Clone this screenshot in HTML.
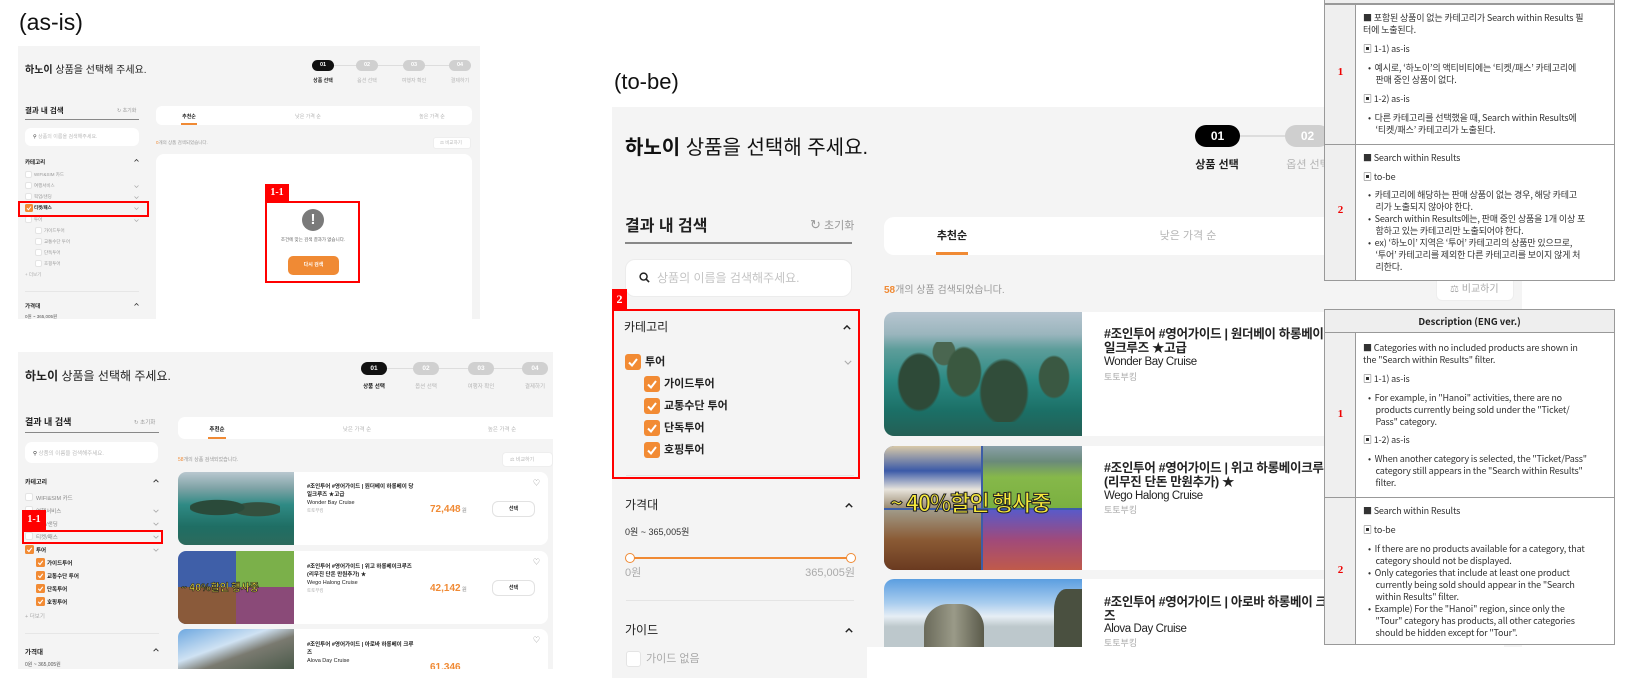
<!DOCTYPE html>
<html><head><meta charset="utf-8"><style>
*{margin:0;padding:0;box-sizing:border-box}
body{width:1631px;height:688px;position:relative;overflow:hidden;background:#fff;font-family:"Liberation Sans","Noto Sans CJK KR",sans-serif;color:#222}
.a{position:absolute;white-space:nowrap}
.p{position:absolute;background:#f4f4f4}
.w{position:absolute;background:#fff}
.cb{position:absolute;background:#fff;border:1px solid #e4e4e4;border-radius:2px}
.g{color:#b5b5b5}
.t{font-family:"Noto Sans CJK KR",sans-serif;font-size:9px;line-height:12px;color:#333;letter-spacing:-0.15px}
.red{position:absolute;border:2px solid #f00}
.lab{position:absolute;background:#f00;color:#fff;font-weight:bold;font-family:"Liberation Serif",serif;text-align:center}
</style></head><body>

<!-- ================= AS-IS 1 ================= -->
<div class="a" style="left:19px;top:8px;font-size:23px;line-height:28px;color:#111">(as-is)</div>
<div class="p" style="left:18px;top:46px;width:462px;height:273px"></div>
<div class="a" style="left:25px;top:65px;font-size:10px;line-height:12px"><b>하노이</b> 상품을 선택해 주세요.</div>
<div class="a" style="left:334px;top:65px;width:115px;height:1px;background:#ddd"></div>
<div class="a" style="left:312px;top:60px;width:22px;height:11px;border-radius:6px;background:#111;color:#fff;font-size:5.5px;line-height:11px;text-align:center;font-weight:bold">01</div>
<div class="a" style="left:356px;top:60px;width:22px;height:11px;border-radius:6px;background:#d0d0d0;color:#fff;font-size:5.5px;line-height:11px;text-align:center;font-weight:bold">02</div>
<div class="a" style="left:403px;top:60px;width:22px;height:11px;border-radius:6px;background:#d0d0d0;color:#fff;font-size:5.5px;line-height:11px;text-align:center;font-weight:bold">03</div>
<div class="a" style="left:449px;top:60px;width:22px;height:11px;border-radius:6px;background:#d0d0d0;color:#fff;font-size:5.5px;line-height:11px;text-align:center;font-weight:bold">04</div>
<div class="a" style="left:303px;top:77px;width:40px;text-align:center;font-size:5px;font-weight:bold">상품 선택</div>
<div class="a g" style="left:347px;top:77px;width:40px;text-align:center;font-size:5px">옵션 선택</div>
<div class="a g" style="left:394px;top:77px;width:40px;text-align:center;font-size:5px">여행자 확인</div>
<div class="a g" style="left:440px;top:77px;width:40px;text-align:center;font-size:5px">결제하기</div>

<div class="a" style="left:25px;top:106px;font-size:7.5px;font-weight:bold;line-height:10px">결과 내 검색</div>
<div class="a" style="left:117px;top:107px;font-size:5px;color:#999">↻ 초기화</div>
<div class="a" style="left:25px;top:119px;width:114px;height:1px;background:#888"></div>
<div class="w" style="left:25px;top:128px;width:114px;height:18px;border-radius:6px"></div>
<div class="a" style="left:33px;top:133px;font-size:5px;color:#bbb"><span style="color:#333">⚲</span> 상품의 이름을 검색해주세요.</div>
<div class="a" style="left:25px;top:158px;font-size:5.5px;font-weight:bold">카테고리</div>
<svg class="a" style="left:134px;top:159px" width="5" height="3" viewBox="0 0 10 6"><path d="M1 5l4-4 4 4" stroke="#333" stroke-width="1.6" fill="none"/></svg>

<div class="cb" style="left:25px;top:171px;width:7px;height:7px"></div><div class="a" style="left:34px;top:172px;font-size:4.5px;color:#999">WIFI&amp;SIM 카드</div>
<div class="cb" style="left:25px;top:182px;width:7px;height:7px"></div><div class="a" style="left:34px;top:183px;font-size:4.5px;color:#999">여행서비스</div>
<div class="cb" style="left:25px;top:193px;width:7px;height:7px"></div><div class="a" style="left:34px;top:194px;font-size:4.5px;color:#999">픽업/샌딩</div>
<svg class="a" style="left:25px;top:204px" width="8" height="8" viewBox="0 0 16 16"><rect width="16" height="16" rx="3" fill="#f28b34"/><path d="M4 8.5l3 3 5-6.5" stroke="#fff" stroke-width="2" fill="none"/></svg><div class="a" style="left:34px;top:205px;font-size:4.5px;font-weight:bold">티켓/패스</div>
<div class="cb" style="left:25px;top:216px;width:7px;height:7px"></div><div class="a" style="left:34px;top:217px;font-size:4.5px;color:#999">투어</div>
<div class="cb" style="left:35px;top:227px;width:7px;height:7px"></div><div class="a" style="left:44px;top:228px;font-size:4.5px;color:#999">가이드투어</div>
<div class="cb" style="left:35px;top:238px;width:7px;height:7px"></div><div class="a" style="left:44px;top:239px;font-size:4.5px;color:#999">교통수단 투어</div>
<div class="cb" style="left:35px;top:249px;width:7px;height:7px"></div><div class="a" style="left:44px;top:250px;font-size:4.5px;color:#999">단독투어</div>
<div class="cb" style="left:35px;top:260px;width:7px;height:7px"></div><div class="a" style="left:44px;top:261px;font-size:4.5px;color:#999">호핑투어</div>
<div class="a" style="left:25px;top:272px;font-size:4.5px;color:#aaa">+ 더보기</div>
<svg class="a" style="left:134px;top:185px" width="5" height="3" viewBox="0 0 10 6"><path d="M1 1l4 4 4-4" stroke="#aaa" stroke-width="1.4" fill="none"/></svg>
<svg class="a" style="left:134px;top:196px" width="5" height="3" viewBox="0 0 10 6"><path d="M1 1l4 4 4-4" stroke="#aaa" stroke-width="1.4" fill="none"/></svg>
<svg class="a" style="left:134px;top:207px" width="5" height="3" viewBox="0 0 10 6"><path d="M1 1l4 4 4-4" stroke="#aaa" stroke-width="1.4" fill="none"/></svg>
<svg class="a" style="left:134px;top:219px" width="5" height="3" viewBox="0 0 10 6"><path d="M1 1l4 4 4-4" stroke="#aaa" stroke-width="1.4" fill="none"/></svg>
<div class="a" style="left:25px;top:291px;width:114px;height:1px;background:#e6e6e6"></div>
<div class="a" style="left:25px;top:302px;font-size:5.5px;font-weight:bold">가격대</div>
<svg class="a" style="left:134px;top:303px" width="5" height="3" viewBox="0 0 10 6"><path d="M1 5l4-4 4 4" stroke="#333" stroke-width="1.6" fill="none"/></svg>
<div class="a" style="left:25px;top:314px;font-size:4.5px;color:#555">0원 ~ 365,005원</div>
<div class="red" style="left:18px;top:201px;width:131px;height:16px"></div>

<div class="w" style="left:156px;top:106px;width:316px;height:19px;border-radius:6px"></div>
<div class="a" style="left:174px;top:113px;width:30px;text-align:center;font-size:5px;font-weight:bold">추천순</div>
<div class="a" style="left:181px;top:123px;width:16px;height:2px;background:#f08a34"></div>
<div class="a g" style="left:288px;top:113px;width:40px;text-align:center;font-size:5px">낮은 가격 순</div>
<div class="a g" style="left:412px;top:113px;width:40px;text-align:center;font-size:5px">높은 가격 순</div>
<div class="a" style="left:156px;top:140px;font-size:4.5px;color:#999"><span style="color:#f08a34">0</span>개의 상품 검색되었습니다.</div>
<div class="w" style="left:433px;top:137px;width:38px;height:12px;border-radius:3px;border:1px solid #eee"></div>
<div class="a g" style="left:440px;top:140px;font-size:4.5px">⚖ 비교하기</div>
<div class="w" style="left:156px;top:154px;width:316px;height:165px;border-radius:8px 8px 0 0"></div>
<div class="a" style="left:302px;top:209px;width:22px;height:22px;border-radius:50%;background:#7a7a7a;color:#fff;font-size:15px;line-height:22px;text-align:center;font-weight:bold">!</div>
<div class="a" style="left:268px;top:237px;width:90px;text-align:center;font-size:4.5px;color:#666">조건에 맞는 검색 결과가 없습니다.</div>
<div class="a" style="left:288px;top:256px;width:51px;height:19px;border-radius:5px;background:#f08a34;color:#fff;font-size:5px;line-height:19px;text-align:center;font-weight:bold">다시 검색</div>
<div class="lab" style="left:265px;top:184px;width:24px;height:18px;font-size:10px;line-height:18px">1-1</div>
<div class="red" style="left:265px;top:201px;width:95px;height:82px"></div>

<!-- ================= AS-IS 2 ================= -->
<div class="p" style="left:18px;top:352px;width:535px;height:317px"></div>
<div class="a" style="left:25px;top:369px;font-size:12px;line-height:15px"><b>하노이</b> 상품을 선택해 주세요.</div>
<div class="a" style="left:387px;top:368px;width:150px;height:1px;background:#ddd"></div>
<div class="a" style="left:361px;top:362px;width:26px;height:13px;border-radius:7px;background:#111;color:#fff;font-size:6.5px;line-height:13px;text-align:center;font-weight:bold">01</div>
<div class="a" style="left:413px;top:362px;width:26px;height:13px;border-radius:7px;background:#d0d0d0;color:#fff;font-size:6.5px;line-height:13px;text-align:center;font-weight:bold">02</div>
<div class="a" style="left:468px;top:362px;width:26px;height:13px;border-radius:7px;background:#d0d0d0;color:#fff;font-size:6.5px;line-height:13px;text-align:center;font-weight:bold">03</div>
<div class="a" style="left:522px;top:362px;width:26px;height:13px;border-radius:7px;background:#d0d0d0;color:#fff;font-size:6.5px;line-height:13px;text-align:center;font-weight:bold">04</div>
<div class="a" style="left:354px;top:382px;width:40px;text-align:center;font-size:5.5px;font-weight:bold">상품 선택</div>
<div class="a g" style="left:406px;top:382px;width:40px;text-align:center;font-size:5.5px">옵션 선택</div>
<div class="a g" style="left:461px;top:382px;width:40px;text-align:center;font-size:5.5px">여행자 확인</div>
<div class="a g" style="left:515px;top:382px;width:40px;text-align:center;font-size:5.5px">결제하기</div>

<div class="a" style="left:25px;top:416px;font-size:9px;font-weight:bold;line-height:12px">결과 내 검색</div>
<div class="a" style="left:134px;top:418px;font-size:5.5px;color:#999">↻ 초기화</div>
<div class="a" style="left:25px;top:432px;width:134px;height:1px;background:#888"></div>
<div class="w" style="left:25px;top:442px;width:133px;height:21px;border-radius:7px"></div>
<div class="a" style="left:33px;top:449px;font-size:5.5px;color:#bbb"><span style="color:#333">⚲</span> 상품의 이름을 검색해주세요.</div>
<div class="a" style="left:25px;top:477px;font-size:6px;font-weight:bold">카테고리</div>
<svg class="a" style="left:153px;top:479px" width="6" height="4" viewBox="0 0 10 6"><path d="M1 5l4-4 4 4" stroke="#333" stroke-width="1.6" fill="none"/></svg>
<div class="cb" style="left:25px;top:493px;width:8px;height:8px"></div><div class="a" style="left:36px;top:494px;font-size:5.5px;color:#888">WIFI&amp;SIM 카드</div>
<div class="cb" style="left:25px;top:506px;width:8px;height:8px"></div><div class="a" style="left:36px;top:507px;font-size:5.5px;color:#888">여행서비스</div>
<div class="cb" style="left:25px;top:519px;width:8px;height:8px"></div><div class="a" style="left:36px;top:520px;font-size:5.5px;color:#888">픽업/샌딩</div>
<div class="cb" style="left:25px;top:532px;width:8px;height:8px"></div><div class="a" style="left:36px;top:533px;font-size:5.5px;color:#888">티켓/패스</div>
<svg class="a" style="left:25px;top:545px" width="9" height="9" viewBox="0 0 16 16"><rect width="16" height="16" rx="3" fill="#f28b34"/><path d="M4 8.5l3 3 5-6.5" stroke="#fff" stroke-width="2" fill="none"/></svg><div class="a" style="left:36px;top:546px;font-size:5.5px;font-weight:bold">투어</div>
<svg class="a" style="left:36px;top:558px" width="9" height="9" viewBox="0 0 16 16"><rect width="16" height="16" rx="3" fill="#f28b34"/><path d="M4 8.5l3 3 5-6.5" stroke="#fff" stroke-width="2" fill="none"/></svg><div class="a" style="left:47px;top:559px;font-size:5.5px;font-weight:bold">가이드투어</div>
<svg class="a" style="left:36px;top:571px" width="9" height="9" viewBox="0 0 16 16"><rect width="16" height="16" rx="3" fill="#f28b34"/><path d="M4 8.5l3 3 5-6.5" stroke="#fff" stroke-width="2" fill="none"/></svg><div class="a" style="left:47px;top:572px;font-size:5.5px;font-weight:bold">교통수단 투어</div>
<svg class="a" style="left:36px;top:584px" width="9" height="9" viewBox="0 0 16 16"><rect width="16" height="16" rx="3" fill="#f28b34"/><path d="M4 8.5l3 3 5-6.5" stroke="#fff" stroke-width="2" fill="none"/></svg><div class="a" style="left:47px;top:585px;font-size:5.5px;font-weight:bold">단독투어</div>
<svg class="a" style="left:36px;top:597px" width="9" height="9" viewBox="0 0 16 16"><rect width="16" height="16" rx="3" fill="#f28b34"/><path d="M4 8.5l3 3 5-6.5" stroke="#fff" stroke-width="2" fill="none"/></svg><div class="a" style="left:47px;top:598px;font-size:5.5px;font-weight:bold">호핑투어</div>
<div class="a" style="left:25px;top:612px;font-size:5.5px;color:#aaa">+ 더보기</div>
<svg class="a" style="left:153px;top:509px" width="6" height="4" viewBox="0 0 10 6"><path d="M1 1l4 4 4-4" stroke="#aaa" stroke-width="1.4" fill="none"/></svg>
<svg class="a" style="left:153px;top:522px" width="6" height="4" viewBox="0 0 10 6"><path d="M1 1l4 4 4-4" stroke="#aaa" stroke-width="1.4" fill="none"/></svg>
<svg class="a" style="left:153px;top:535px" width="6" height="4" viewBox="0 0 10 6"><path d="M1 1l4 4 4-4" stroke="#aaa" stroke-width="1.4" fill="none"/></svg>
<svg class="a" style="left:153px;top:548px" width="6" height="4" viewBox="0 0 10 6"><path d="M1 1l4 4 4-4" stroke="#aaa" stroke-width="1.4" fill="none"/></svg>
<div class="a" style="left:25px;top:633px;width:134px;height:1px;background:#e6e6e6"></div>
<div class="a" style="left:25px;top:646px;font-size:6.5px;font-weight:bold">가격대</div>
<svg class="a" style="left:153px;top:648px" width="6" height="4" viewBox="0 0 10 6"><path d="M1 5l4-4 4 4" stroke="#333" stroke-width="1.6" fill="none"/></svg>
<div class="a" style="left:25px;top:661px;font-size:5px;color:#555">0원 ~ 365,005원</div>
<div class="red" style="left:22px;top:530px;width:141px;height:14px"></div>
<div class="lab" style="left:22px;top:510px;width:24px;height:20px;font-size:10px;line-height:20px">1-1</div>

<div class="w" style="left:178px;top:417px;width:375px;height:22px;border-radius:7px 0 0 7px"></div>
<div class="a" style="left:202px;top:425px;width:30px;text-align:center;font-size:5.5px;font-weight:bold">추천순</div>
<div class="a" style="left:208px;top:437px;width:18px;height:2px;background:#f08a34"></div>
<div class="a g" style="left:337px;top:425px;width:40px;text-align:center;font-size:5.5px">낮은 가격 순</div>
<div class="a g" style="left:482px;top:425px;width:40px;text-align:center;font-size:5.5px">높은 가격 순</div>
<div class="a" style="left:178px;top:456px;font-size:5px;color:#999"><span style="color:#f08a34">58</span>개의 상품 검색되었습니다.</div>
<div class="w" style="left:502px;top:452px;width:51px;height:15px;border-radius:4px;border:1px solid #eee"></div>
<div class="a g" style="left:510px;top:456px;font-size:5px">⚖ 비교하기</div>

<!-- cards as-is 2 -->
<div class="w" style="left:178px;top:472px;width:370px;height:73px;border-radius:8px"></div>
<div class="a" style="left:178px;top:472px;width:116px;height:73px;border-radius:8px 0 0 8px;background:linear-gradient(180deg,#b9c7cf 0%,#7fa3a6 22%,#2f8a84 45%,#1f6e64 75%,#2c6a5c 100%)"></div>
<div class="a" style="left:190px;top:490px;width:90px;height:35px;background:radial-gradient(ellipse at 30% 50%,#2a4a3a 0 30%,transparent 32%),radial-gradient(ellipse at 75% 55%,#34503e 0 25%,transparent 27%)"></div>
<div class="w" style="left:178px;top:551px;width:370px;height:73px;border-radius:8px"></div>
<div class="a" style="left:178px;top:551px;width:116px;height:73px;border-radius:8px 0 0 8px;overflow:hidden;background:linear-gradient(90deg,#3f5fa8 0 50%,#7bb04a 50% 100%)">
<div class="a" style="left:0;top:36px;width:58px;height:37px;background:#8a5a3a"></div><div class="a" style="left:58px;top:36px;width:58px;height:37px;background:#8a4a78"></div>
<div class="a" style="left:3px;top:28px;font-size:10px;font-weight:bold;font-family:'Noto Sans CJK KR',sans-serif;color:#f5e43a;-webkit-text-stroke:0.6px #222">~ 40%할인 행사중</div></div>
<div class="w" style="left:178px;top:629px;width:370px;height:40px;border-radius:8px 8px 0 0"></div>
<div class="a" style="left:178px;top:629px;width:116px;height:40px;border-radius:8px 0 0 0;background:linear-gradient(160deg,#6ea8e0 0%,#cfe2f3 40%,#7a7a70 60%,#4a5a4a 100%)"></div>

<div class="a" style="left:307px;top:483px;font-size:5.5px;line-height:8px;font-weight:bold">#조인투어 #영어가이드 | 원더베이 하롱베이 당<br>일크루즈 ★고급</div>
<div class="a" style="left:307px;top:499px;font-size:5.5px;line-height:8px">Wonder Bay Cruise</div>
<div class="a" style="left:307px;top:507px;font-size:4.5px;line-height:8px;color:#aaa">토토부킹</div>
<div class="a" style="left:430px;top:504px;font-size:10px;color:#f08a34;font-weight:bold">72,448<span style="font-size:5px;color:#aaa"> 원</span></div>
<div class="w" style="left:492px;top:501px;width:43px;height:16px;border:1px solid #e2e2e2;border-radius:6px;font-size:5px;line-height:14px;text-align:center;font-weight:bold">선택</div>
<div class="a" style="left:533px;top:478px;font-size:7px;color:#999">♡</div>
<div class="a" style="left:307px;top:563px;font-size:5.5px;line-height:8px;font-weight:bold">#조인투어 #영어가이드 | 위고 하롱베이크루즈<br>(리무진 단돈 만원추가) ★</div>
<div class="a" style="left:307px;top:579px;font-size:5.5px;line-height:8px">Wego Halong Cruise</div>
<div class="a" style="left:307px;top:587px;font-size:4.5px;line-height:8px;color:#aaa">토토부킹</div>
<div class="a" style="left:430px;top:583px;font-size:10px;color:#f08a34;font-weight:bold">42,142<span style="font-size:5px;color:#aaa"> 원</span></div>
<div class="w" style="left:492px;top:580px;width:43px;height:16px;border:1px solid #e2e2e2;border-radius:6px;font-size:5px;line-height:14px;text-align:center;font-weight:bold">선택</div>
<div class="a" style="left:533px;top:557px;font-size:7px;color:#999">♡</div>
<div class="a" style="left:307px;top:641px;font-size:5.5px;line-height:8px;font-weight:bold">#조인투어 #영어가이드 | 아로바 하롱베이 크루<br>즈</div>
<div class="a" style="left:307px;top:657px;font-size:5.5px;line-height:8px">Alova Day Cruise</div>
<div class="a" style="left:430px;top:661px;font-size:10px;color:#f08a34;font-weight:bold;height:8px;overflow:hidden;line-height:13px">61,346</div>
<div class="a" style="left:533px;top:635px;font-size:7px;color:#999">♡</div>

<!-- ================= TO-BE ================= -->
<div class="a" style="left:614px;top:68px;font-size:22px;line-height:28px;color:#111">(to-be)</div>
<div class="p" style="left:612px;top:107px;width:910px;height:571px"></div>
<div class="a" style="left:625px;top:134px;font-size:20px;line-height:28px;color:#111"><b>하노이</b> 상품을 선택해 주세요.</div>
<div class="a" style="left:1240px;top:135px;width:50px;height:2px;background:#ddd"></div>
<div class="a" style="left:1195px;top:125px;width:45px;height:22px;border-radius:11px;background:#000;color:#fff;font-size:12px;font-weight:bold;line-height:22px;text-align:center">01</div>
<div class="a" style="left:1285px;top:125px;width:45px;height:22px;border-radius:11px;background:#cfcfcf;color:#fff;font-size:12px;font-weight:bold;line-height:22px;text-align:center">02</div>
<div class="a" style="left:1187px;top:157px;width:60px;text-align:center;font-size:11px;font-weight:bold;line-height:16px">상품 선택</div>
<div class="a g" style="left:1278px;top:157px;width:60px;text-align:center;font-size:11px;line-height:16px">옵션 선택</div>

<div class="a" style="left:625px;top:216px;font-size:16px;font-weight:bold;line-height:22px;color:#222">결과 내 검색</div>
<div class="a" style="left:810px;top:217px;font-size:11px;line-height:16px;color:#999"><span style="font-size:13px">↻</span> 초기화</div>
<div class="a" style="left:625px;top:242px;width:227px;height:2px;background:#888"></div>
<div class="w" style="left:625px;top:259px;width:227px;height:38px;border-radius:10px;border:1px solid #ececec"></div>
<svg class="a" style="left:639px;top:272px" width="11" height="11" viewBox="0 0 12 12"><circle cx="5" cy="5" r="3.8" stroke="#222" stroke-width="1.6" fill="none"/><path d="M8 8l3 3" stroke="#222" stroke-width="1.8"/></svg>
<div class="a" style="left:657px;top:270px;font-size:12px;line-height:16px;color:#c4c4c4">상품의 이름을 검색해주세요.</div>

<div class="a" style="left:624px;top:319px;font-size:12px;line-height:16px">카테고리</div>
<svg class="a" style="left:843px;top:325px" width="8" height="5" viewBox="0 0 10 6"><path d="M1 5l4-4 4 4" stroke="#222" stroke-width="1.8" fill="none"/></svg>
<svg class="a" style="left:625px;top:354px" width="16" height="16" viewBox="0 0 16 16"><rect width="16" height="16" rx="3" fill="#f28b34"/><path d="M4 8.5l3 3 5-6.5" stroke="#fff" stroke-width="2" fill="none"/></svg>
<div class="a" style="left:645px;top:354px;font-size:11px;font-weight:bold;line-height:16px">투어</div>
<svg class="a" style="left:844px;top:360px" width="8" height="5" viewBox="0 0 10 6"><path d="M1 1l4 4 4-4" stroke="#aaa" stroke-width="1.3" fill="none"/></svg>
<svg class="a" style="left:644px;top:376px" width="16" height="16" viewBox="0 0 16 16"><rect width="16" height="16" rx="3" fill="#f28b34"/><path d="M4 8.5l3 3 5-6.5" stroke="#fff" stroke-width="2" fill="none"/></svg>
<div class="a" style="left:664px;top:376px;font-size:11px;font-weight:bold;line-height:16px">가이드투어</div>
<svg class="a" style="left:644px;top:398px" width="16" height="16" viewBox="0 0 16 16"><rect width="16" height="16" rx="3" fill="#f28b34"/><path d="M4 8.5l3 3 5-6.5" stroke="#fff" stroke-width="2" fill="none"/></svg>
<div class="a" style="left:664px;top:398px;font-size:11px;font-weight:bold;line-height:16px">교통수단 투어</div>
<svg class="a" style="left:644px;top:420px" width="16" height="16" viewBox="0 0 16 16"><rect width="16" height="16" rx="3" fill="#f28b34"/><path d="M4 8.5l3 3 5-6.5" stroke="#fff" stroke-width="2" fill="none"/></svg>
<div class="a" style="left:664px;top:420px;font-size:11px;font-weight:bold;line-height:16px">단독투어</div>
<svg class="a" style="left:644px;top:442px" width="16" height="16" viewBox="0 0 16 16"><rect width="16" height="16" rx="3" fill="#f28b34"/><path d="M4 8.5l3 3 5-6.5" stroke="#fff" stroke-width="2" fill="none"/></svg>
<div class="a" style="left:664px;top:442px;font-size:11px;font-weight:bold;line-height:16px">호핑투어</div>
<div class="a" style="left:626px;top:475px;width:228px;height:1px;background:#e4e4e4"></div>
<div class="lab" style="left:612px;top:289px;width:15px;height:20px;font-size:12px;line-height:20px">2</div>
<div class="red" style="left:612px;top:309px;width:248px;height:170px"></div>

<div class="a" style="left:625px;top:497px;font-size:12px;line-height:16px">가격대</div>
<svg class="a" style="left:845px;top:503px" width="8" height="5" viewBox="0 0 10 6"><path d="M1 5l4-4 4 4" stroke="#222" stroke-width="1.8" fill="none"/></svg>
<div class="a" style="left:625px;top:526px;font-size:9px;line-height:12px;color:#333">0원 ~ 365,005원</div>
<div class="a" style="left:630px;top:557px;width:220px;height:2px;background:#f08a34"></div>
<div class="a" style="left:625px;top:553px;width:10px;height:10px;border-radius:50%;background:#fff;border:1.5px solid #f08a34"></div>
<div class="a" style="left:846px;top:553px;width:10px;height:10px;border-radius:50%;background:#fff;border:1.5px solid #f08a34"></div>
<div class="a" style="left:625px;top:566px;font-size:11px;line-height:14px;color:#aaa">0원</div>
<div class="a" style="left:776px;top:566px;width:79px;text-align:right;font-size:11px;line-height:14px;color:#aaa">365,005원</div>
<div class="a" style="left:626px;top:600px;width:228px;height:1px;background:#e4e4e4"></div>
<div class="a" style="left:625px;top:622px;font-size:12px;line-height:16px">가이드</div>
<svg class="a" style="left:845px;top:628px" width="8" height="5" viewBox="0 0 10 6"><path d="M1 5l4-4 4 4" stroke="#222" stroke-width="1.8" fill="none"/></svg>
<div class="cb" style="left:626px;top:651px;width:15px;height:16px;border-radius:3px"></div>
<div class="a" style="left:646px;top:651px;font-size:11px;line-height:16px;color:#aaa">가이드 없음</div>

<div class="w" style="left:884px;top:217px;width:620px;height:38px;border-radius:10px"></div>
<div class="a" style="left:922px;top:228px;width:60px;text-align:center;font-size:11px;font-weight:bold;line-height:16px">추천순</div>
<div class="a" style="left:936px;top:252px;width:32px;height:3px;background:#f08a34"></div>
<div class="a g" style="left:1148px;top:228px;width:80px;text-align:center;font-size:11px;line-height:16px">낮은 가격 순</div>
<div class="a" style="left:884px;top:284px;font-size:10px;line-height:14px;color:#999"><b style="color:#f08a34">58</b>개의 상품 검색되었습니다.</div>
<div class="w" style="left:1436px;top:270px;width:78px;height:31px;border-radius:6px;border:1px solid #eee"></div>
<div class="a" style="left:1450px;top:283px;font-size:10px;line-height:14px;color:#aaa">⚖ 비교하기</div>

<!-- to-be cards -->
<div class="w" style="left:884px;top:312px;width:620px;height:124px;border-radius:10px"></div>
<div class="a" style="left:884px;top:312px;width:198px;height:124px;border-radius:10px 0 0 10px;overflow:hidden;background:linear-gradient(180deg,#b7c5d0 0%,#9ab5bd 18%,#5d9d9a 30%,#2b8a83 55%,#1b6f66 80%,#245f55 100%)">
<div class="a" style="left:0;top:30px;width:198px;height:80px;background:radial-gradient(ellipse 22px 30px at 35px 40px,#2e4a38 90%,transparent),radial-gradient(ellipse 18px 26px at 80px 30px,#3a5840 90%,transparent),radial-gradient(ellipse 25px 34px at 120px 50px,#314d3a 90%,transparent),radial-gradient(ellipse 16px 22px at 170px 35px,#3a5842 90%,transparent),radial-gradient(ellipse 12px 14px at 60px 10px,#4a6650 90%,transparent)"></div></div>
<div class="w" style="left:884px;top:446px;width:620px;height:124px;border-radius:10px"></div>
<div class="a" style="left:884px;top:446px;width:198px;height:124px;border-radius:10px 0 0 10px;overflow:hidden;background:#3d5da6">
<div class="a" style="left:0;top:0;width:97px;height:62px;background:linear-gradient(180deg,#d8c9a8,#3b5aa8 40%,#e8e4dc 70%,#9a8a70)"></div>
<div class="a" style="left:99px;top:0;width:99px;height:62px;background:linear-gradient(180deg,#8aa0a8 0,#6a8a7a 25%,#86b84a 50%,#7ab040 100%)"></div>
<div class="a" style="left:0;top:64px;width:97px;height:60px;background:linear-gradient(180deg,#a09a88,#8a5a34 50%,#6a3a20)"></div>
<div class="a" style="left:99px;top:64px;width:99px;height:60px;background:linear-gradient(180deg,#5a5ac8,#a04a7a 50%,#c05a4a)"></div>
<div class="a" style="left:6px;top:40px;font-size:22px;font-weight:bold;font-family:'Noto Sans CJK KR',sans-serif;color:#f7e93a;-webkit-text-stroke:1px #222;letter-spacing:-1px">~ 40%할인 행사중</div></div>
<div class="w" style="left:884px;top:579px;width:620px;height:68px;border-radius:10px 10px 0 0"></div>
<div class="a" style="left:884px;top:579px;width:198px;height:68px;border-radius:10px 0 0 0;overflow:hidden;background:linear-gradient(180deg,#5b9ee0 0%,#a8ccee 35%,#e6eef5 55%,#bdc8cc 70%)">
<div class="a" style="left:40px;top:25px;width:60px;height:60px;border-radius:40% 40% 0 0;background:linear-gradient(90deg,#6a6a5a,#9a9a88,#5a5a4a)"></div>
<div class="a" style="left:170px;top:10px;width:40px;height:70px;background:#4a5040;border-radius:30% 0 0 0"></div></div>

<div class="a" style="left:1104px;top:327px;font-size:12.5px;font-weight:bold;line-height:14px;letter-spacing:-0.3px">#조인투어 #영어가이드 | 원더베이 하롱베이 당<br>일크루즈 ★고급</div>
<div class="a" style="left:1104px;top:355px;font-size:11.5px;line-height:14px;letter-spacing:-0.4px">Wonder Bay Cruise</div>
<div class="a" style="left:1104px;top:371px;font-size:9px;line-height:12px;color:#aaa">토토부킹</div>
<div class="a" style="left:1104px;top:461px;font-size:12.5px;font-weight:bold;line-height:14px;letter-spacing:-0.3px">#조인투어 #영어가이드 | 위고 하롱베이크루즈<br>(리무진 단돈 만원추가) ★</div>
<div class="a" style="left:1104px;top:489px;font-size:11.5px;line-height:14px;letter-spacing:-0.4px">Wego Halong Cruise</div>
<div class="a" style="left:1104px;top:504px;font-size:9px;line-height:12px;color:#aaa">토토부킹</div>
<div class="a" style="left:1104px;top:595px;font-size:12.5px;font-weight:bold;line-height:14px;letter-spacing:-0.3px">#조인투어 #영어가이드 | 아로바 하롱베이 크루<br>즈</div>
<div class="a" style="left:1104px;top:622px;font-size:11.5px;line-height:14px;letter-spacing:-0.4px">Alova Day Cruise</div>
<div class="a" style="left:1104px;top:637px;font-size:9px;line-height:12px;color:#aaa">토토부킹</div>
<div class="w" style="left:867px;top:647px;width:764px;height:41px"></div>

<!-- ================= TABLE 1 ================= -->
<div class="a" style="left:1324px;top:-2px;width:291px;height:6px;background:#eee;border:1px solid #999"></div>
<div class="w" style="left:1324px;top:4px;width:291px;height:277px;border:1px solid #999"></div>
<div class="a" style="left:1325px;top:5px;width:31px;height:275px;background:#efefef;border-right:1px solid #999"></div>
<div class="a" style="left:1324px;top:144px;width:291px;height:1px;background:#999"></div>
<div class="a" style="left:1325px;top:66px;width:31px;text-align:center;color:#e00;font-weight:bold;font-size:11px;font-family:'Liberation Serif',serif">1</div>
<div class="a" style="left:1325px;top:204px;width:31px;text-align:center;color:#e00;font-weight:bold;font-size:11px;font-family:'Liberation Serif',serif">2</div>
<div class="a t" style="left:1363px;top:12px">■ 포함된 상품이 없는 카테고리가 Search within Results 필<br>터에 노출된다.</div>
<div class="a t" style="left:1363px;top:43px">▣ 1-1) as-is</div>
<div class="a t" style="left:1368px;top:62px">•&nbsp; 예시로, ‘하노이’의 액티비티에는 ‘티켓/패스’ 카테고리에<br>&nbsp;&nbsp;&nbsp; 판매 중인 상품이 없다.</div>
<div class="a t" style="left:1363px;top:93px">▣ 1-2) as-is</div>
<div class="a t" style="left:1368px;top:112px">•&nbsp; 다른 카테고리를 선택했을 때, Search within Results에<br>&nbsp;&nbsp;&nbsp; ‘티켓/패스’ 카테고리가 노출된다.</div>
<div class="a t" style="left:1363px;top:152px">■ Search within Results</div>
<div class="a t" style="left:1363px;top:171px">▣ to-be</div>
<div class="a t" style="left:1368px;top:189px">•&nbsp; 카테고리에 해당하는 판매 상품이 없는 경우, 해당 카테고<br>&nbsp;&nbsp;&nbsp; 리가 노출되지 않아야 한다.<br>•&nbsp; Search within Results에는, 판매 중인 상품을 1개 이상 포<br>&nbsp;&nbsp;&nbsp; 함하고 있는 카테고리만 노출되어야 한다.<br>•&nbsp; ex) ‘하노이’ 지역은 ‘투어’ 카테고리의 상품만 있으므로,<br>&nbsp;&nbsp;&nbsp; ‘투어’ 카테고리를 제외한 다른 카테고리를 보이지 않게 처<br>&nbsp;&nbsp;&nbsp; 리한다.</div>

<!-- ================= TABLE 2 ================= -->
<div class="w" style="left:1324px;top:309px;width:291px;height:336px;border:1px solid #999"></div>
<div class="a" style="left:1325px;top:310px;width:289px;height:23px;background:#eee;border-bottom:1px solid #999;text-align:center;font-family:'Noto Sans CJK KR',sans-serif;font-size:9.5px;font-weight:bold;line-height:23px">Description (ENG ver.)</div>
<div class="a" style="left:1325px;top:333px;width:31px;height:311px;background:#efefef;border-right:1px solid #999"></div>
<div class="a" style="left:1324px;top:497px;width:291px;height:1px;background:#999"></div>
<div class="a" style="left:1325px;top:408px;width:31px;text-align:center;color:#e00;font-weight:bold;font-size:11px;font-family:'Liberation Serif',serif">1</div>
<div class="a" style="left:1325px;top:564px;width:31px;text-align:center;color:#e00;font-weight:bold;font-size:11px;font-family:'Liberation Serif',serif">2</div>
<div class="a t" style="left:1363px;top:342px">■ Categories with no included products are shown in<br>the "Search within Results" filter.</div>
<div class="a t" style="left:1363px;top:373px">▣ 1-1) as-is</div>
<div class="a t" style="left:1368px;top:392px">•&nbsp; For example, in "Hanoi" activities, there are no<br>&nbsp;&nbsp;&nbsp; products currently being sold under the "Ticket/<br>&nbsp;&nbsp;&nbsp; Pass" category.</div>
<div class="a t" style="left:1363px;top:434px">▣ 1-2) as-is</div>
<div class="a t" style="left:1368px;top:453px">•&nbsp; When another category is selected, the "Ticket/Pass"<br>&nbsp;&nbsp;&nbsp; category still appears in the "Search within Results"<br>&nbsp;&nbsp;&nbsp; filter.</div>
<div class="a t" style="left:1363px;top:505px">■ Search within Results</div>
<div class="a t" style="left:1363px;top:524px">▣ to-be</div>
<div class="a t" style="left:1368px;top:543px">•&nbsp; If there are no products available for a category, that<br>&nbsp;&nbsp;&nbsp; category should not be displayed.<br>•&nbsp; Only categories that include at least one product<br>&nbsp;&nbsp;&nbsp; currently being sold should appear in the "Search<br>&nbsp;&nbsp;&nbsp; within Results" filter.<br>•&nbsp; Example) For the "Hanoi" region, since only the<br>&nbsp;&nbsp;&nbsp; "Tour" category has products, all other categories<br>&nbsp;&nbsp;&nbsp; should be hidden except for "Tour".</div>
</body></html>
